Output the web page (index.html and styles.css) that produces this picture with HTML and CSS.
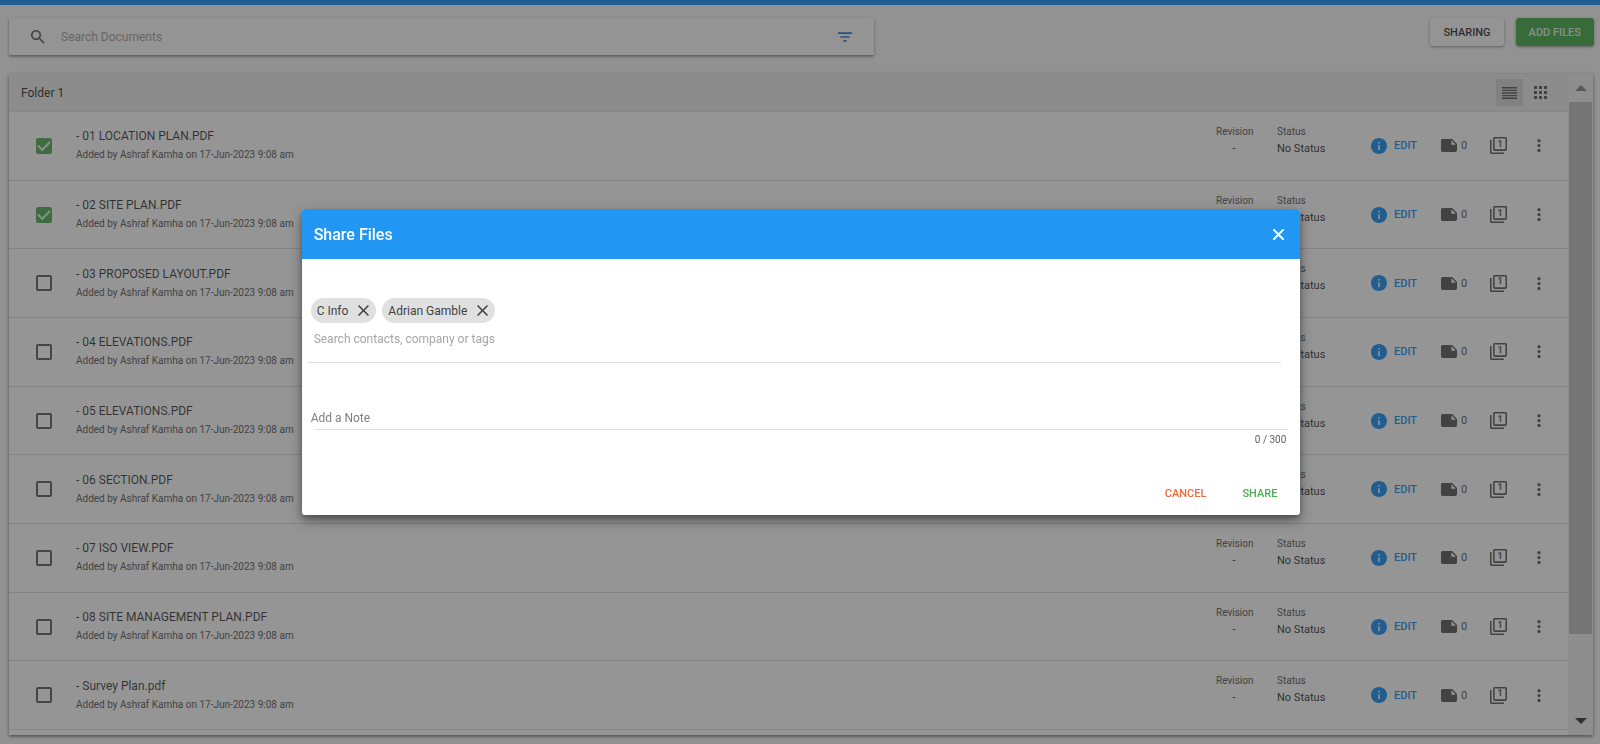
FILE: index.html
```html
<!DOCTYPE html>
<html lang="en">
<head>
<meta charset="utf-8">
<title>Documents</title>
<link rel="stylesheet" href="styles.css">
</head>
<body>
<svg class="sprite" aria-hidden="true">
  <symbol id="i-search" viewBox="3 3 18 18"><path d="M15.5 14h-.79l-.28-.27C15.41 12.59 16 11.11 16 9.5 16 5.91 13.09 3 9.5 3S3 5.91 3 9.5 5.91 16 9.5 16c1.61 0 3.09-.59 4.23-1.57l.27.28v.79l5 4.99L20.49 19l-4.99-5zm-6 0C7.01 14 5 11.99 5 9.5S7.01 5 9.5 5 14 7.01 14 9.5 11.99 14 9.5 14z"/></symbol>
  <symbol id="i-filter" viewBox="3 6 18 12"><path d="M10 18h4v-2h-4v2zM3 6v2h18V6H3zm3 7h12v-2H6v2z"/></symbol>
  <symbol id="i-lines" viewBox="0 0 15 12"><path d="M0 0h15v1.400H0zM0 2.650h15v1.400H0zM0 5.300h15v1.400H0zM0 7.950h15v1.400H0zM0 10.600h15V12H0z"/></symbol>
  <symbol id="i-grid" viewBox="0 0 13 13"><path d="M0 0h3v3H0zM5 0h3v3H5zM10 0h3v3h-3zM0 5h3v3H0zM5 5h3v3H5zM10 5h3v3h-3zM0 10h3v3H0zM5 10h3v3H5zM10 10h3v3h-3z"/></symbol>
  <symbol id="i-info" viewBox="2 2 20 20"><path d="M12 2C6.48 2 2 6.48 2 12s4.48 10 10 10 10-4.48 10-10S17.52 2 12 2zm1 15h-2v-6h2v6zm0-8h-2V7h2v2z"/></symbol>
  <symbol id="i-note" viewBox="2 4 20 16"><path d="M22 10l-6-6H4c-1.1 0-2 .9-2 2v12.01c0 1.1.9 1.99 2 1.99l16-.01c1.1 0 2-.89 2-1.99v-8zm-7-4.5l5.5 5.5H15V5.5z"/></symbol>
  <symbol id="i-stack" viewBox="1 1 22 22"><path d="M3 5H1v16c0 1.1.9 2 2 2h16v-2H3V5zM21 1H7c-1.1 0-2 .9-2 2v14c0 1.1.9 2 2 2h14c1.1 0 2-.9 2-2V3c0-1.1-.9-2-2-2zm0 16H7V3h14v14z"/></symbol>
  <symbol id="i-more" viewBox="10 4 4 16"><path d="M12 8c1.1 0 2-.9 2-2s-.9-2-2-2-2 .9-2 2 .9 2 2 2zm0 2c-1.1 0-2 .9-2 2s.9 2 2 2 2-.9 2-2-.9-2-2-2zm0 6c-1.1 0-2 .9-2 2s.9 2 2 2 2-.9 2-2-.9-2-2-2z"/></symbol>
  <symbol id="i-close" viewBox="5 5 14 14"><path d="M19 6.41L17.59 5 12 10.59 6.41 5 5 6.41 10.59 12 5 17.59 6.41 19 12 13.41 17.59 19 19 17.59 13.41 12z"/></symbol>
</svg>

<div class="page">
  <div class="topbar"></div>
  <header class="toolbar">
    <form class="search">
      <svg class="search-icon"><use href="#i-search"/></svg>
      <input class="search-input" type="search" placeholder="Search Documents" aria-label="Search Documents">
      <button class="icon-btn filter" type="button" aria-label="Filter"><svg><use href="#i-filter"/></svg></button>
    </form>
    <div class="actions">
      <button class="btn" type="button">SHARING</button>
      <button class="btn btn-green" type="button">ADD FILES</button>
    </div>
  </header>

  <main class="panel">
    <div class="list">
      <div class="list-head">
        <span>Folder 1</span>
        <div class="views">
          <button class="view active" type="button" aria-label="List view"><svg class="v-lines"><use href="#i-lines"/></svg></button>
          <button class="view" type="button" aria-label="Grid view"><svg class="v-grid"><use href="#i-grid"/></svg></button>
        </div>
      </div>
      <div class="rows" id="rows"></div>
    </div>
    <div class="scroll" aria-hidden="true">
      <div class="arrow up"></div>
      <div class="track"><div class="thumb"></div></div>
      <div class="arrow down"></div>
    </div>
  </main>
</div>

<div class="overlay">
  <section class="dialog" role="dialog" aria-modal="true" aria-labelledby="dlg-title">
    <div class="dialog-head">
      <h2 id="dlg-title">Share Files</h2>
      <button class="icon-btn close" type="button" aria-label="Close"><svg><use href="#i-close"/></svg></button>
    </div>
    <div class="dialog-body">
      <div class="contacts">
        <div class="chips">
          <span class="chip">C Info<button class="icon-btn" type="button" aria-label="Remove C Info"><svg><use href="#i-close"/></svg></button></span>
          <span class="chip">Adrian Gamble<button class="icon-btn" type="button" aria-label="Remove Adrian Gamble"><svg><use href="#i-close"/></svg></button></span>
        </div>
        <input class="contact-input" type="text" placeholder="Search contacts, company or tags" aria-label="Search contacts, company or tags">
      </div>
      <div class="note">
        <label for="note">Add a Note</label>
        <input class="note-input" id="note" type="text" maxlength="300">
        <div class="counter">0 / 300</div>
      </div>
    </div>
    <div class="dialog-actions">
      <button class="text-btn cancel" type="button">CANCEL</button>
      <button class="text-btn share" type="button">SHARE</button>
    </div>
  </section>
</div>
<script src="rows.js"></script>
</body>
</html>
```

FILE: styles.css
```css
* { box-sizing: border-box; }
body {
  margin: 0;
  font-family: Roboto, "Liberation Sans", sans-serif;
  font-size: 12px;
  color: rgba(0, 0, 0, .8);
  background: #fafafa;
}
button, input { font: inherit; color: inherit; margin: 0; padding: 0; border: 0; background: none; outline: 0; }
svg { display: block; fill: currentColor; }
.sprite { display: none; }
.icon-btn { display: grid; place-items: center; }

.page { height: 100vh; display: flex; flex-direction: column; overflow: hidden; }
.topbar { height: 5px; flex: none; background: #2196f3; }
.toolbar { flex: none; display: flex; justify-content: space-between; align-items: flex-start; padding: 13px 6px 18px 9px; }
.search {
  width: 54.6%;
  height: 37px;
  margin-bottom: 1px;
  display: flex;
  align-items: center;
  padding: 0 22px;
  background: #fdfdfd;
  box-shadow: 0 1px 3px rgba(0, 0, 0, .3), 0 2px 2px rgba(0, 0, 0, .2);
}
.search-icon { width: 14px; height: 14px; color: #616161; }
.search-input { flex: 1; margin-left: 16px; }
.search-input::placeholder, .contact-input::placeholder { color: #a6a6a6; opacity: 1; }
.filter svg { width: 14px; height: 10px; color: #2a7fd0; }
.actions { display: flex; gap: 12px; }
.btn {
  height: 28px;
  padding: 0 13px;
  border-radius: 3px;
  background: #fdfdfd;
  font-size: 11px;
  font-weight: 500;
  box-shadow: 0 1px 3px rgba(0, 0, 0, .4);
}
.btn-green { background: #4caf50; color: #e4f3e4; }

.panel {
  flex: 1;
  min-height: 0;
  display: flex;
  margin: 0 7px 9px 9px;
  background: #fff;
  box-shadow: 0 1px 4px rgba(0, 0, 0, .4), 0 2px 2px rgba(0, 0, 0, .2);
}
.list { flex: 1; display: flex; flex-direction: column; padding-bottom: 5px; }
.list-head {
  height: 38px;
  flex: none;
  display: flex;
  align-items: center;
  justify-content: space-between;
  padding: 0 14px 0 12px;
  background: #ededed;
  border-bottom: 1px solid #e2e2e2;
}
.views { display: flex; gap: 4px; }
.view { width: 27px; height: 27px; display: grid; place-items: center; color: #616161; }
.view.active { background: #d9d9d9; }
.v-lines { width: 15px; height: 12px; }
.v-grid { width: 13px; height: 13px; }

.rows { flex: 1; display: flex; flex-direction: column; }
.row {
  flex: 1;
  display: flex;
  align-items: center;
  padding: 0 26px 0 27px;
  border-bottom: 1px solid #e0e0e0;
  color: #616161;
}
.check {
  appearance: none;
  width: 16px;
  height: 16px;
  display: grid;
  place-items: center;
  border: 2px solid #666;
  border-radius: 2px;
}
.check:checked { background: #58b05c; border-color: #58b05c; }
.check:checked::after {
  content: "";
  width: 10px;
  height: 5px;
  margin-bottom: 3px;
  border: solid #e4f3e4;
  border-width: 0 0 2px 2px;
  transform: rotate(-45deg);
}
.file { flex: 1; margin-left: 24px; padding-bottom: 1px; }
.file label { display: block; line-height: 20px; color: rgba(0, 0, 0, .75); }
.file small { display: block; font-size: 10px; line-height: 18px; color: #616161; }
.meta { font-size: 10px; line-height: 16px; margin-bottom: 10px; }
.meta dd { margin: 0; font-size: 11px; line-height: 18px; color: rgba(0, 0, 0, .8); }
.meta dl { margin: 0; }
.revision { width: 36px; text-align: center; margin-right: 25px; white-space: nowrap; }
.status { width: 94px; }
.edit { display: flex; align-items: center; gap: 7px; width: 70px; color: #2196f3; font-size: 11px; font-weight: 500; }
.edit svg { width: 16px; height: 16px; }
.notes { display: flex; align-items: center; gap: 4px; width: 49px; font-size: 11px; }
.notes svg { width: 16px; height: 13px; }
.stack { font-size: 9px; font-weight: 700; line-height: 11px; }
.stack svg, .stack span { grid-area: 1 / 1; }
.stack svg { width: 17px; height: 17px; }
.stack span { padding: 0 0 3px 3px; }
.more { width: 6px; margin-left: 29px; }
.more svg { width: 4px; height: 13px; }

.scroll { width: 25px; display: flex; flex-direction: column; padding: 0 1px; background: #f1f1f1; }
.arrow { height: 28px; flex: none; display: grid; place-items: center; color: #8c8c8c; }
.arrow::after { content: ""; border: 6px solid transparent; }
.up::after { border-top-width: 0; border-bottom-color: currentColor; }
.down { color: #404040; }
.down::after { border-bottom-width: 0; border-top-color: currentColor; }
.track { flex: 1; }
.thumb { height: 88%; background: #c1c1c1; }

.overlay {
  position: fixed;
  inset: 0;
  display: flex;
  align-items: center;
  justify-content: center;
  padding: 0 0 20px 2px;
  background: rgba(33, 33, 33, .48);
}
.dialog {
  width: 62.5%;
  background: #fff;
  border-radius: 3px;
  overflow: hidden;
  box-shadow: 0 6px 14px rgba(0, 0, 0, .35), 0 3px 5px rgba(0, 0, 0, .25);
}
.dialog-head {
  height: 50px;
  display: flex;
  align-items: center;
  justify-content: space-between;
  padding: 0 16px 0 12px;
  background: #2196f3;
  color: #fff;
}
.dialog-head h2 { margin: 0; font-size: 16px; font-weight: 500; }
.close svg { width: 11px; height: 11px; stroke: currentColor; }
.dialog-body { padding: 39px 12px 0 6px; }
.contacts { margin-right: 7px; height: 65px; border-bottom: 1px solid #e0e0e0; }
.chips { display: flex; gap: 6px; padding-left: 3px; }
.chip {
  height: 25px;
  display: flex;
  align-items: center;
  gap: 10px;
  padding: 0 7px 0 6px;
  border-radius: 13px;
  background: #e0e0e0;
  color: #424242;
}
.chip svg { width: 11px; height: 11px; }
.contact-input { display: block; width: 100%; height: 31px; padding-left: 6px; }
.note { margin-top: 45px; }
.note label { display: block; padding: 0 0 1px 3px; line-height: 20px; color: #808080; }
.note-input { display: block; width: calc(100% - 6px); height: 1px; margin-left: 6px; background: #e0e0e0; }
.counter { padding-right: 2px; font-size: 10px; line-height: 20px; text-align: right; color: #616161; }
.dialog-actions { display: flex; justify-content: flex-end; gap: 36px; padding: 34px 23px 11px; }
.text-btn { font-size: 11px; font-weight: 500; line-height: 20px; }
.cancel { color: #ee6a3c; }
.share { color: #4caf50; }
```

FILE: rows.js
```js
const files = [
  "- 01 LOCATION PLAN.PDF",
  "- 02 SITE PLAN.PDF",
  "- 03 PROPOSED LAYOUT.PDF",
  "- 04 ELEVATIONS.PDF",
  "- 05 ELEVATIONS.PDF",
  "- 06 SECTION.PDF",
  "- 07 ISO VIEW.PDF",
  "- 08 SITE MANAGEMENT PLAN.PDF",
  "- Survey Plan.pdf"
];
document.getElementById("rows").innerHTML = files.map((name, i) => `
  <div class="row">
    <input class="check" type="checkbox" id="file-${i}" ${i < 2 ? "checked" : ""}>
    <div class="file"><label for="file-${i}">${name}</label><small>Added by Ashraf Kamha on 17-Jun-2023 9:08 am</small></div>
    <div class="meta revision"><dl><dt>Revision</dt><dd>-</dd></dl></div>
    <div class="meta status"><dl><dt>Status</dt><dd>No Status</dd></dl></div>
    <button class="edit" type="button"><svg><use href="#i-info"/></svg>EDIT</button>
    <div class="notes"><svg><use href="#i-note"/></svg>0</div>
    <button class="icon-btn stack" type="button" aria-label="1 version"><svg><use href="#i-stack"/></svg><span>1</span></button>
    <button class="icon-btn more" type="button" aria-label="More"><svg><use href="#i-more"/></svg></button>
  </div>`).join("");
```
